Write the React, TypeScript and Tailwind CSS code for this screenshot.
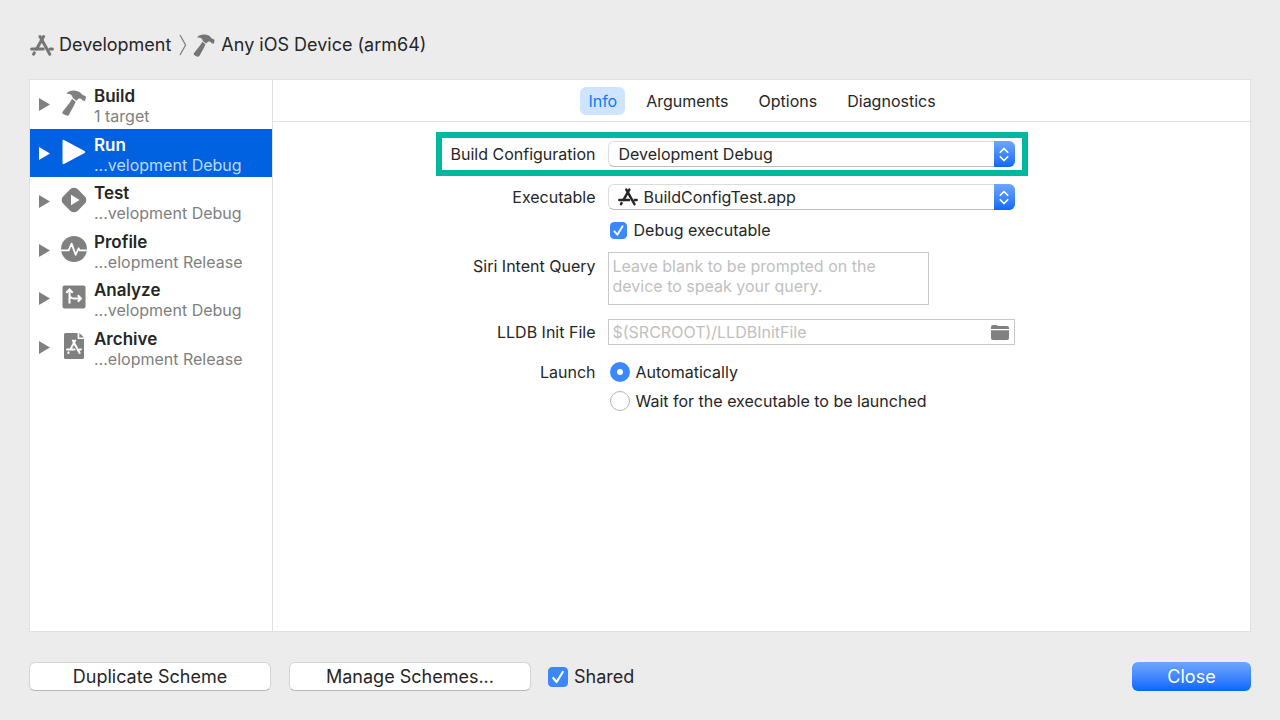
import { useState } from 'react';
import type { ReactNode } from 'react';
import { clsx } from 'clsx';

type IconProps = { className?: string };

const AppIcon = ({ className }: IconProps) => (
    <svg viewBox="0 0 24 21" className={className} fill="none" stroke="currentColor" strokeWidth="3">
        <path d="M13.6 1.6 L6.6 14" strokeLinecap="round" />
        <path d="M4.3 17.8 L3.6 19.2" strokeLinecap="round" />
        <path d="M10 1.6 L19.8 19.2" strokeLinecap="round" />
        <path d="M1.6 14 H13.2 M20 14 H22.4" strokeLinecap="round" />
    </svg>
);

const HammerIcon = ({ className }: IconProps) => (
    <svg viewBox="0 0 76 80" className={className} fill="currentColor">
        <path d="M14 12 C20 4 30 1 42 2 C52 3 59 7 63 14 C66 17 70 16 75 21 L72 34 L65 32 C60 26 56 25 52 27 L45 33 L34 24 C33 15 25 11 14 12 Z" />
        <path d="M32 27 L43 36 C41 44 32 58 23 75 Q20 81 13 78 L5 74 Q0 71 3 67 C12 54 24 43 32 27 Z" />
    </svg>
);

const RunIcon = ({ className }: IconProps) => (
    <svg viewBox="0 0 26 26" className={className} fill="currentColor">
        <path d="M1.5 2 Q1.5 .4 3 1 L23.6 12 Q25 13 23.6 14 L3 25 Q1.5 25.6 1.5 24 Z" />
    </svg>
);

const TestIcon = ({ className }: IconProps) => (
    <svg viewBox="0 0 26 26" className={className}>
        <rect x="2.8" y="2.8" width="20.4" height="20.4" rx="5" transform="rotate(45 13 13)" fill="currentColor" />
        <path d="M10 7.8 L18.6 13 L10 18.2 Z" fill="white" />
    </svg>
);

const ProfileIcon = ({ className }: IconProps) => (
    <svg viewBox="0 0 26 26" className={className}>
        <circle cx="13" cy="13" r="13" fill="currentColor" />
        <path
            d="M0 14.3 H7.6 L10.6 7.6 L14.6 18.8 L17.6 12.3 L18.6 14.3 H26"
            fill="none"
            stroke="white"
            strokeWidth="1.8"
            strokeLinejoin="round"
        />
    </svg>
);

const AnalyzeIcon = ({ className }: IconProps) => (
    <svg viewBox="0 0 26 26" className={className}>
        <rect x="1.5" y="1.5" width="23" height="23" rx="2" fill="currentColor" />
        <path
            d="M8.5 19.5 V6 M5.3 8.8 L8.5 5.5 L11.7 8.8 M8.5 10.5 Q8.8 14.5 13 14.5 H19.5 M16.8 11.3 L20 14.5 L16.8 17.7"
            fill="none"
            stroke="white"
            strokeWidth="2"
        />
    </svg>
);

const ArchiveIcon = ({ className }: IconProps) => (
    <svg viewBox="0 0 26 26" className={className}>
        <path d="M4.5 0 H16.6 V6 H23 V24.5 Q23 26 21.5 26 H4.5 Q3 26 3 24.5 V1.5 Q3 0 4.5 0 Z" fill="currentColor" />
        <path d="M18.3 0 L23 4.4 H18.3 Z" fill="currentColor" />
        <g fill="none" stroke="white" strokeWidth="2" strokeLinecap="round">
            <path d="M14.2 7.6 L9.6 16 M7.6 19.4 L7.3 20 M11.8 7.6 L18.6 20 M6 16.4 H13.6 M18.6 16.4 H20" />
        </g>
    </svg>
);

const FolderIcon = ({ className }: IconProps) => (
    <svg viewBox="0 0 18 15" className={className} fill="currentColor">
        <path d="M0 4 V2 Q0 0 2 0 H5 Q6 0 6.6 .7 L7 1 H16 Q18 1 18 3 V4 Z" />
        <path d="M0 5.3 H18 V13 Q18 15 16 15 H2 Q0 15 0 13 Z" />
    </svg>
);

const actions = [
    { name: 'Build', detail: '1 target', Icon: HammerIcon },
    { name: 'Run', detail: '...velopment Debug', Icon: RunIcon },
    { name: 'Test', detail: '...velopment Debug', Icon: TestIcon },
    { name: 'Profile', detail: '...elopment Release', Icon: ProfileIcon },
    { name: 'Analyze', detail: '...velopment Debug', Icon: AnalyzeIcon },
    { name: 'Archive', detail: '...elopment Release', Icon: ArchiveIcon },
];

const tabs = ['Info', 'Arguments', 'Options', 'Diagnostics'];

const PopUp = ({ id, value, icon }: { id: string; value: string; icon?: ReactNode }) => (
    <div className="relative">
        <select
            id={id}
            className={clsx(
                'block h-[26px] w-full appearance-none rounded-md border border-[#dcdcdc] border-b-[#bdbdbd] bg-white pr-8',
                icon ? 'pl-[35px]' : 'pl-[10px]'
            )}
        >
            <option>{value}</option>
        </select>
        {icon}
        <span className="pointer-events-none absolute inset-y-0 right-0 flex w-[21px] items-center justify-center rounded-r-md bg-linear-to-b from-[#6ea6fa] to-[#0a68fb]">
            <svg viewBox="0 0 10 16" className="h-[15px] w-[10px]" fill="none" stroke="white" strokeWidth="1.8" strokeLinecap="round" strokeLinejoin="round">
                <path d="M1 5.6 L5 1.6 L9 5.6 M1 10.4 L5 14.4 L9 10.4" />
            </svg>
        </span>
    </div>
);

const CheckBox = ({ label, large }: { label: string; large?: boolean }) => (
    <label className={clsx('flex items-center', large ? 'gap-[6px] text-lg' : 'gap-[7px]')}>
        <span className={clsx('relative', large ? 'size-5' : 'size-[17px]')}>
            <input
                type="checkbox"
                defaultChecked
                className="peer block size-full appearance-none rounded-sm border border-[#bdbdbd] bg-white checked:border-[#3b88fd] checked:bg-[#3b88fd]"
            />
            <svg
                viewBox="0 0 20 20"
                className="pointer-events-none absolute inset-0 hidden size-full peer-checked:block"
                fill="none"
                stroke="white"
                strokeWidth="2.2"
                strokeLinecap="round"
                strokeLinejoin="round"
            >
                <path d="M5.2 11 L8.6 15 L14.8 5" />
            </svg>
        </span>
        {label}
    </label>
);

const Radio = ({ label, checked }: { label: string; checked?: boolean }) => (
    <label className="flex h-5 items-center gap-[6px]">
        <input
            type="radio"
            name="launch"
            defaultChecked={checked}
            className="size-5 appearance-none rounded-full border border-[#b5b5b5] bg-white checked:border-[7px] checked:border-[#3b88fd]"
        />
        {label}
    </label>
);

// One label / control line of the form
const Row = ({ className, children }: { className?: string; children: ReactNode }) => (
    <div className={clsx('grid grid-cols-[147px_1fr] gap-x-3', className)}>{children}</div>
);

const Sidebar = () => {
    const [selected, setSelected] = useState('Run');

    return (
        <nav className="w-[243px] shrink-0 border-r border-[#e0e0e0]">
            <ul>
                {actions.map(({ name, detail, Icon }) => {
                    const active = name === selected;
                    return (
                        <li key={name} className="even:mt-px">
                            <button
                                type="button"
                                onClick={() => setSelected(name)}
                                className={clsx(
                                    'flex h-12 w-full items-center pl-[9px] text-left',
                                    active ? 'bg-[#0162e1] text-white' : 'text-[#808080]'
                                )}
                            >
                                <svg viewBox="0 0 11 13" className="h-[13px] w-[11px]" fill="currentColor">
                                    <path d="M0 0 L11 6.5 L0 13 Z" />
                                </svg>
                                <Icon className="mb-[2px] ml-[11px] size-[26px]" />
                                <span className="ml-[7px] flex flex-col pt-[3px] leading-5">
                                    <span className={clsx('text-[17px] font-semibold', !active && 'text-[#262626]')}>{name}</span>
                                    <span className={clsx(active && 'text-[#bfd8f8]')}>{detail}</span>
                                </span>
                            </button>
                        </li>
                    );
                })}
            </ul>
        </nav>
    );
};

const RunSettings = () => (
    <form className="w-full max-w-[592px] leading-5">
        <Row className="items-center border-6 border-[#00b89f] px-[7px] py-[3px]">
            <label htmlFor="configuration" className="text-right">
                Build Configuration
            </label>
            <PopUp id="configuration" value="Development Debug" />
        </Row>
        <Row className="mt-2 items-center px-[13px]">
            <label htmlFor="executable" className="text-right">
                Executable
            </label>
            <PopUp
                id="executable"
                value="BuildConfigTest.app"
                icon={<AppIcon className="pointer-events-none absolute top-1 left-[10px] h-[18px] w-5" />}
            />
        </Row>
        <Row className="mt-[10px] px-[13px]">
            <div className="col-start-2 pl-[2px]">
                <CheckBox label="Debug executable" />
            </div>
        </Row>
        <Row className="mt-3 px-[13px]">
            <label htmlFor="siri" className="pt-1 text-right">
                Siri Intent Query
            </label>
            <textarea
                id="siri"
                placeholder="Leave blank to be prompted on the device to speak your query."
                className="block h-[53px] w-full max-w-[321px] resize-none overflow-hidden border border-[#c8c8c8] px-1 py-[3px] placeholder:text-[#bfbfbf]"
            />
        </Row>
        <Row className="mt-[14px] items-center px-[13px]">
            <label htmlFor="lldb" className="text-right">
                LLDB Init File
            </label>
            <div className="flex h-[26px] items-center border border-[#c8c8c8] pr-[5px]">
                <input
                    id="lldb"
                    type="text"
                    placeholder="$(SRCROOT)/LLDBInitFile"
                    className="min-w-0 flex-1 px-1 placeholder:text-[#bfbfbf]"
                />
                <button type="button" aria-label="Choose file">
                    <FolderIcon className="h-[15px] w-[18px] text-[#808080]" />
                </button>
            </div>
        </Row>
        <Row className="mt-[17px] px-[13px]">
            <span className="text-right">Launch</span>
            <div className="flex flex-col gap-[9px] pl-[2px]">
                <Radio label="Automatically" checked />
                <Radio label="Wait for the executable to be launched" />
            </div>
        </Row>
    </form>
);

export default function App() {
    const [tab, setTab] = useState('Info');

    return (
        <div className="flex min-h-screen flex-col bg-[#ececec] p-[29px] font-['Inter',sans-serif] text-base text-[#262626]">
            <header className="flex h-8 items-center pl-px text-lg">
                <AppIcon className="h-[21px] w-6 text-[#757575]" />
                <span className="ml-[5px]">Development</span>
                <svg viewBox="0 0 8 22" className="ml-2 h-[22px] w-2" fill="none" stroke="#808080" strokeWidth="1.3">
                    <path d="M1 1 L6.6 11 L1 21" />
                </svg>
                <HammerIcon className="ml-[6px] h-[23px] w-[22px] text-[#757575]" />
                <span className="ml-[6px]">Any iOS Device (arm64)</span>
            </header>

            <main className="mt-[18px] flex flex-1 border border-[#e0e0e0] bg-white">
                <Sidebar />
                <section className="flex-1">
                    <div className="flex h-[42px] items-center justify-center gap-1 border-b border-[#e0e0e0] pl-[6px]">
                        {tabs.map((name) => (
                            <button
                                key={name}
                                type="button"
                                onClick={() => setTab(name)}
                                className={clsx(
                                    'h-7 rounded-md',
                                    name === tab ? 'mr-1 bg-[#cfe5ff] px-2 text-[#0a7aff]' : 'px-[13px]'
                                )}
                            >
                                {name}
                            </button>
                        ))}
                    </div>
                    <div className="flex justify-center pt-[10px] pr-[60px]">
                        <RunSettings />
                    </div>
                </section>
            </main>

            <footer className="mt-[30px] flex items-center text-lg">
                <button type="button" className="h-[29px] w-[242px] rounded-md border border-[#d4d4d4] border-b-[#b8b8b8] bg-white leading-6">
                    Duplicate Scheme
                </button>
                <button type="button" className="ml-[18px] h-[29px] w-[242px] rounded-md border border-[#d4d4d4] border-b-[#b8b8b8] bg-white leading-6">
                    Manage Schemes...
                </button>
                <div className="ml-[17px]">
                    <CheckBox label="Shared" large />
                </div>
                <button type="button" className="ml-auto h-[29px] w-[119px] rounded-md bg-linear-to-b from-[#6ea6fa] to-[#0565ff] text-white">
                    Close
                </button>
            </footer>
        </div>
    );
}
